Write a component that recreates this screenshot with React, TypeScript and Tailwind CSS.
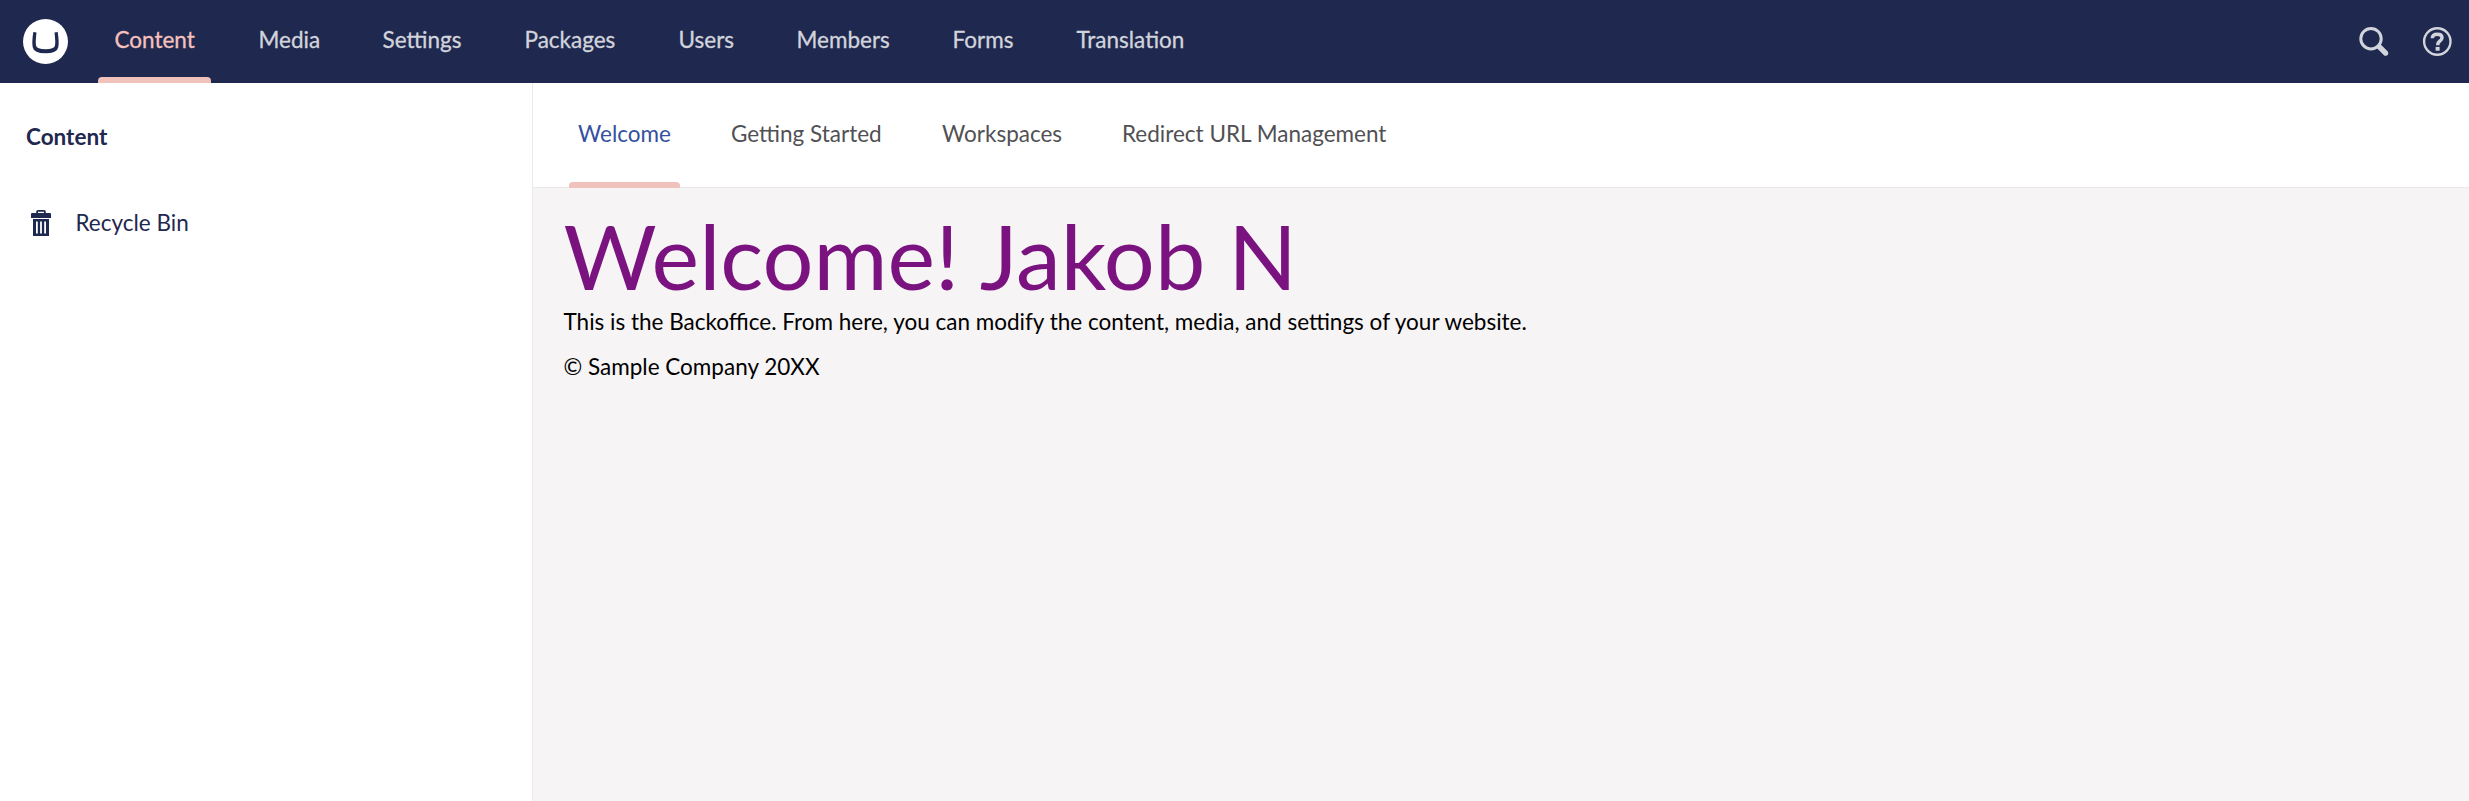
const sections = [
  { label: 'Content', width: 'w-[144px]' },
  { label: 'Media', width: 'w-[124px]' },
  { label: 'Settings', width: 'w-[142px]' },
  { label: 'Packages', width: 'w-[154px]' },
  { label: 'Users', width: 'w-[118px]' },
  { label: 'Members', width: 'w-[156px]' },
  { label: 'Forms', width: 'w-[124px]' },
  { label: 'Translation', width: 'w-[140px]' },
];

const dashboards = [
  { label: 'Welcome', width: 'w-[153px]' },
  { label: 'Getting Started', width: 'w-[211px]' },
  { label: 'Workspaces', width: 'w-[180px]' },
  { label: 'Redirect URL Management', width: 'w-[280px]' },
];

function Logo() {
  return (
    <svg className="ml-[23px] mt-[19px] size-[45px] shrink-0" viewBox="0 0 45 45">
      <circle cx="22.5" cy="22.5" r="22.5" fill="#fff" />
      <path
        d="M10.300 13 Q8.700 23.500 9.700 28.200 Q10.900 34.300 22.500 34.300 Q34.100 34.300 35.300 28.200 Q36.300 23.500 34.700 13 L31.500 13.400 Q32.700 23 32 26.500 Q31.200 30.300 22.500 30.300 Q13.800 30.300 13 26.500 Q12.300 23 13.500 13.400 Z"
        fill="#1f284f"
      />
    </svg>
  );
}

function TrashIcon() {
  return (
    <svg className="ml-[31px] h-[26px] w-5 shrink-0" viewBox="0 0 20 26" fill="#1f284f">
      <path d="M5.200 3 V1.800 Q5.200 0 7 0 H13 Q14.800 0 14.800 1.800 V3 H19 Q20 3 20 4 V8 H0 V4 Q0 3 1 3 Z M7 3 H13 V1.700 H7 Z" fillRule="evenodd" />
      <path d="M2 9 H18 V26 H2 Z M5 11.500 V23.500 H6.800 V11.500 Z M9.100 11.500 V23.500 H10.900 V11.500 Z M13.200 11.500 V23.500 H15 V11.500 Z" fillRule="evenodd" />
    </svg>
  );
}

function SearchIcon() {
  return (
    <svg className="size-[30px]" viewBox="0 0 30 30" fill="none" stroke="#d2d4dc">
      <circle cx="12" cy="11.700" r="10.200" strokeWidth="3" />
      <path d="M19 18.500 L27.300 26.800" strokeWidth="5" />
      <path d="M20.500 20 L26.700 26.200" strokeWidth="5" strokeLinecap="round" />
    </svg>
  );
}

function HelpIcon() {
  return (
    <svg className="size-[30px]" viewBox="0 0 30 30" fill="none" stroke="#d2d4dc">
      <circle cx="15.300" cy="14.500" r="13.200" strokeWidth="2.400" />
      <path d="M10.300 11.200 Q10.400 7.300 15.300 7.300 Q20 7.300 20 10.800 Q20 12.700 17.600 14.300 Q15.700 15.600 15.700 18.200" strokeWidth="3.500" />
      <path d="M15.600 19.900 V23.700" strokeWidth="4" />
    </svg>
  );
}

export default function App() {
  return (
    <div className="flex h-[801px] w-full flex-col overflow-hidden bg-white font-['Lato',sans-serif] text-[22.5px] leading-[30px]">
      <header className="flex h-[83px] shrink-0 bg-[#1f284f]">
        <Logo />
        <nav className="ml-[30px] flex [-webkit-text-stroke:0.3px]">
          {sections.map((s, i) => (
            <div key={s.label} className={`${s.width} flex shrink-0 flex-col justify-between`}>
              <span
                className={`ml-[16.500px] mt-[25px] whitespace-nowrap ${i === 0 ? 'text-[#f5c1bc]' : 'text-[#d2d4dc]'}`}
              >
                {s.label}
              </span>
              {i === 0 && <div className="h-[6px] w-[113px] rounded-t-[4px] bg-[#f1c1bc]" />}
            </div>
          ))}
        </nav>
        <div className="ml-auto mr-[17px] mt-[27px] flex gap-[33px]">
          <SearchIcon />
          <HelpIcon />
        </div>
      </header>
      <div className="flex min-h-0 flex-1">
        <aside className="w-[533px] shrink-0 border-r border-[#e9e9eb] bg-white text-[#1f284f]">
          <h2 className="ml-[26px] mt-[39px] font-bold">Content</h2>
          <div className="mt-[55px] flex items-center">
            <TrashIcon />
            <span className="ml-[24.500px] pt-px">Recycle Bin</span>
          </div>
        </aside>
        <main className="flex min-w-0 flex-1 flex-col bg-[#f6f4f5]">
          <div className="flex h-[105px] shrink-0 border-b border-[#e9e9eb] bg-white pl-[36px]">
            {dashboards.map((d, i) => (
              <div key={d.label} className={`${d.width} flex shrink-0 flex-col justify-between`}>
                <span
                  className={`ml-[9px] mt-[36px] whitespace-nowrap ${i === 0 ? 'text-[#3550a1]' : 'text-[#515054]'}`}
                >
                  {d.label}
                </span>
                {i === 0 && <div className="-mb-px h-[6px] w-[111px] rounded-t-[4px] bg-[#f1c1bc]" />}
              </div>
            ))}
          </div>
          <div className="pl-[30.500px] text-black">
            <h1 className="mt-[22px] text-[90px] leading-[90px] text-[#7a127f]">Welcome! Jakob N</h1>
            <p className="mt-[7px]">
              This is the Backoffice. From here, you can modify the content, media, and settings of your website.
            </p>
            <p className="mt-[15px]">© Sample Company 20XX</p>
          </div>
        </main>
      </div>
    </div>
  );
}
